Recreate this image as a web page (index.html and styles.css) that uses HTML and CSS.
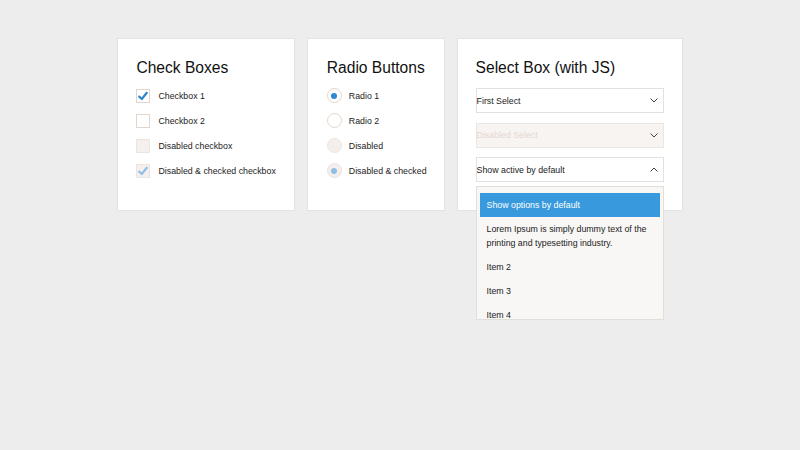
FILE: index.html
```html
<!DOCTYPE html>
<html>
<head>
<meta charset="utf-8">
<link rel="stylesheet" href="styles.css">
</head>
<body>
<div class="cards">
  <section class="card card-check">
    <h2 class="title">Check Boxes</h2>
    <div class="list">
      <label class="row"><span class="cb checked"><svg viewBox="0 0 14 14"><path d="M3.2 7.6 L5.8 10 L10.8 3.8" /></svg></span>Checkbox 1</label>
      <label class="row"><span class="cb"></span>Checkbox 2</label>
      <label class="row"><span class="cb disabled"></span>Disabled checkbox</label>
      <label class="row"><span class="cb disabled checked light"><svg viewBox="0 0 14 14"><path d="M3.2 7.6 L5.8 10 L10.8 3.8" /></svg></span>Disabled &amp; checked checkbox</label>
    </div>
  </section>
  <section class="card card-radio">
    <h2 class="title">Radio Buttons</h2>
    <div class="list">
      <label class="row"><span class="rb checked"></span>Radio 1</label>
      <label class="row"><span class="rb"></span>Radio 2</label>
      <label class="row"><span class="rb disabled"></span>Disabled</label>
      <label class="row"><span class="rb disabled checked light"></span>Disabled &amp; checked</label>
    </div>
  </section>
  <section class="card card-select">
    <h2 class="title">Select Box (with JS)</h2>
    <div class="selects">
      <div class="select"><span>First Select</span><svg class="chev" viewBox="0 0 8 5"><path d="M0.5 0.5 L4 4 L7.5 0.5"/></svg></div>
      <div class="select disabled"><span>Disabled Select</span><svg class="chev" viewBox="0 0 8 5"><path d="M0.5 0.5 L4 4 L7.5 0.5"/></svg></div>
      <div class="select open"><span>Show active by default</span><svg class="chev" viewBox="0 0 8 5"><path d="M0.5 4.5 L4 1 L7.5 4.5"/></svg>
        <ul class="dropdown">
          <li class="active">Show options by default</li>
          <li>Lorem Ipsum is simply dummy text of the printing and typesetting industry.</li>
          <li>Item 2</li>
          <li>Item 3</li>
          <li>Item 4</li>
        </ul>
      </div>
    </div>
  </section>
</div>
</body>
</html>
```

FILE: styles.css
```css
html, body {
  margin: 0;
  padding: 0;
}
body {
  background: #ededed;
  font-family: "Liberation Sans", Arial, sans-serif;
  color: #222;
  width: 800px;
  height: 450px;
  overflow: hidden;
}
.cards {
  display: flex;
  justify-content: center;
  align-items: stretch;
  gap: 12px;
  padding-top: 38px;
}
.card {
  background: #fff;
  border: 1px solid #e3e3e3;
  padding: 19px 19px 26px 19px;
}
.card-check {
  padding-left: 18px;
  padding-right: 18px;
}
.card-radio {
  padding-right: 17px;
}
.card-select {
  padding: 19px 18px 28px 18px;
}
.title {
  margin: 0 0 5px 0;
  font-size: 15.6px;
  font-weight: normal;
  line-height: 20px;
  color: #111;
}
.list {
  display: flex;
  flex-direction: column;
}
.row {
  display: flex;
  align-items: center;
  height: 25px;
  font-size: 8.8px;
  color: #222;
  white-space: nowrap;
}
.cb {
  width: 14px;
  height: 14px;
  box-sizing: border-box;
  border: 1px solid #e2d5cd;
  background: #fff;
  margin-right: 8px;
  display: flex;
  align-items: center;
  justify-content: center;
}
.cb svg {
  width: 14px;
  height: 14px;
  flex: none;
}
.cb path {
  fill: none;
  stroke: #2f86c9;
  stroke-width: 2.2;
  stroke-linecap: round;
  stroke-linejoin: round;
}
.cb.disabled {
  background: #f5f0ed;
  border-color: #ece4df;
}
.cb.light path {
  stroke: #8fc1e8;
}
.rb {
  width: 15px;
  height: 15px;
  box-sizing: border-box;
  border: 1px solid #e3d5cc;
  border-radius: 50%;
  background: #fff;
  margin-right: 7px;
  display: flex;
  align-items: center;
  justify-content: center;
}
.rb.checked::after {
  content: "";
  width: 6px;
  height: 6px;
  border-radius: 50%;
  background: #2f89d2;
}
.rb.disabled {
  background: #f4efec;
  border-color: #ede5e1;
}
.rb.light {
  border-color: #eedfe2;
}
.rb.light::after {
  background: #8fbfe5;
}
.selects {
  display: flex;
  flex-direction: column;
  gap: 9.5px;
  padding-top: 5px;
}
.select {
  position: relative;
  width: 188px;
  height: 25px;
  box-sizing: border-box;
  border: 1px solid #e4e0dd;
  background: #fff;
  display: flex;
  align-items: center;
  justify-content: space-between;
  padding: 0 5px 0 0;
  font-size: 8.8px;
  color: #222;
}
.select .chev {
  width: 8px;
  height: 5px;
}
.chev path {
  fill: none;
  stroke: #444;
  stroke-width: 1;
}
.select.disabled {
  background: #f7f4f2;
  color: #e5d8d1;
  border-color: #ebe6e2;
}
.dropdown {
  position: absolute;
  left: -1px;
  top: 28px;
  width: 188px;
  height: 134px;
  box-sizing: border-box;
  margin: 0;
  padding: 6px 3px 0 3px;
  list-style: none;
  background: #f8f7f5;
  border: 1px solid #e2deda;
  overflow: hidden;
}
.dropdown li {
  padding: 5px 7px;
  line-height: 14px;
  font-size: 8.8px;
  color: #222;
}
.dropdown li.active {
  background: #3899dc;
  color: #fff;
}
```
